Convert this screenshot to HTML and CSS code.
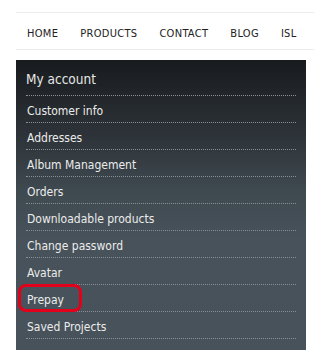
FILE: index.html
```html
<!DOCTYPE html>
<html lang="en">
<head>
    <meta charset="UTF-8">
    <meta name="viewport" content="width=device-width, initial-scale=1.0">
    <title>My account</title>
    <link rel="stylesheet" href="styles.css">
</head>
<body>
    <div class="page">
        <ul class="top-menu">
            <li><a href="#">Home</a></li>
            <li><a href="#">Products</a></li>
            <li><a href="#">Contact</a></li>
            <li><a href="#">Blog</a></li>
            <li><a href="#">ISL</a></li>
        </ul>

        <div class="block-account">
            <div class="title">My account</div>
            <ul class="list">
                <li><a href="#">Customer info</a></li>
                <li><a href="#">Addresses</a></li>
                <li><a href="#">Album Management</a></li>
                <li><a href="#">Orders</a></li>
                <li><a href="#">Downloadable products</a></li>
                <li><a href="#">Change password</a></li>
                <li><a href="#">Avatar</a></li>
                <li class="marked"><a href="#">Prepay</a></li>
                <li><a href="#">Saved Projects</a></li>
            </ul>
        </div>
    </div>
</body>
</html>
```

FILE: styles.css
```css
body {
    margin: 0;
    background: #fff;
    font-family: "DejaVu Sans Condensed", "DejaVu Sans", Verdana, sans-serif;
    font-stretch: condensed;
}
.page {
    padding: 12px 0 0 16px;
}
.top-menu {
    list-style: none;
    margin: 0;
    padding: 0 0 0 11px;
    height: 36px;
    display: flex;
    align-items: center;
    border-top: 1px solid #ececec;
    border-bottom: 1px solid #ececec;
}
.top-menu li {
    margin-right: 22px;
}
.top-menu a {
    color: #222;
    text-decoration: none;
    text-transform: uppercase;
    font-size: 11px;
    letter-spacing: 0.3px;
}
.block-account {
    margin-top: 10px;
    width: 290px;
    padding: 0 10px 11px;
    box-sizing: border-box;
    background: linear-gradient(to bottom, #181b1e 0%, #2c3237 25%, #3f4950 45%, #47525a 62%, #47525a 100%);
}
.title {
    height: 35px;
    line-height: 38px;
    font-size: 13.5px;
    color: #e6e6e6;
    border-bottom: 1px dotted #8a8f93;
}
.list {
    list-style: none;
    margin: 0;
    padding: 0;
}
.list li {
    height: 26px;
    line-height: 27px;
    border-bottom: 1px dotted #8a8f93;
    padding-left: 1px;
}
.list a {
    color: #ececec;
    text-decoration: none;
    font-size: 12px;
}
.marked {
    position: relative;
}
.marked::after {
    content: "";
    position: absolute;
    left: -8px;
    top: -1px;
    width: 58px;
    height: 22px;
    border: 3px solid #e3001b;
    border-radius: 8px;
}
```
